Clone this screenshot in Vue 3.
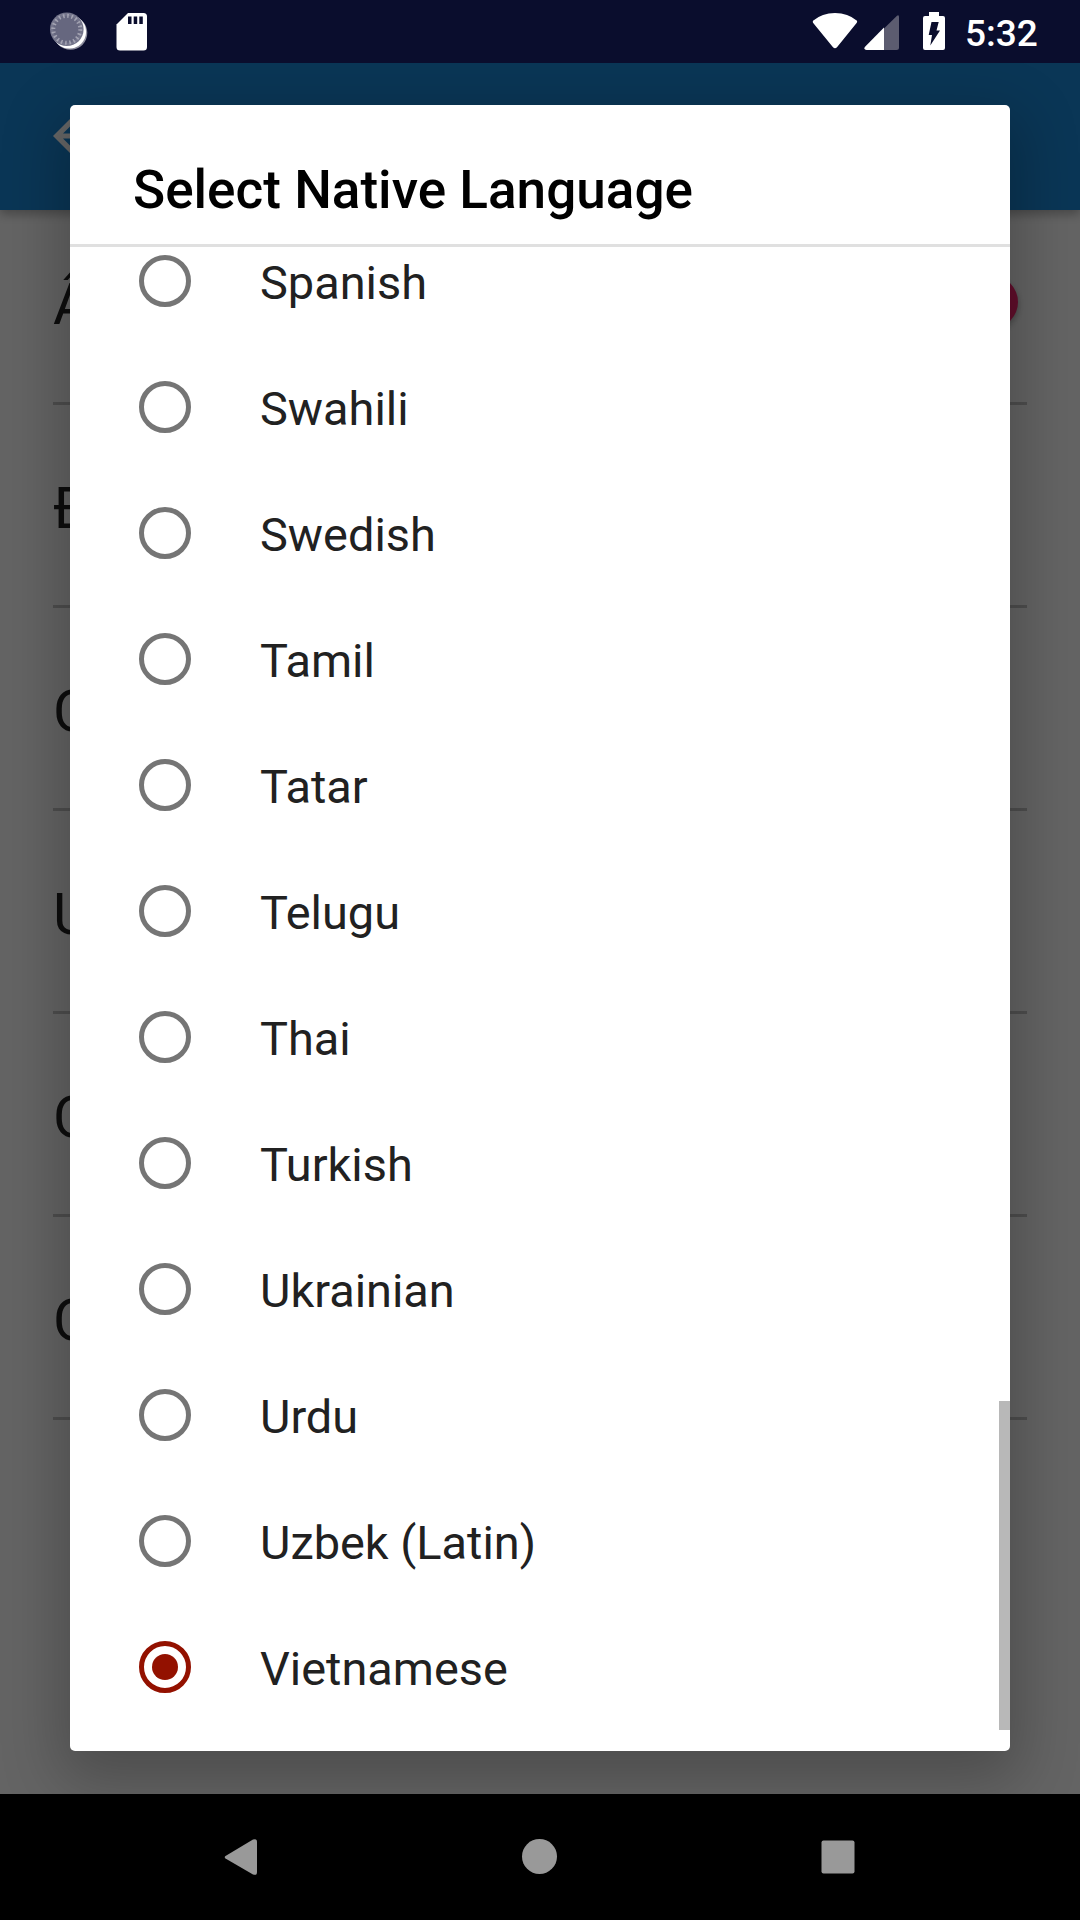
<template>
  <div class="screen">
    <header class="status-bar">
      <div class="status-left">
        <svg class="sync-icon" width="40" height="40" viewBox="0 0 40 40">
          <circle cx="20.5" cy="21" r="16.800" fill="#8d8d9d" />
          <circle cx="19.300" cy="19.800" r="16.800" fill="#fff" />
          <circle cx="16.800" cy="17.300" r="16.800" fill="#74758b" />
          <circle
            cx="16.800"
            cy="17.300"
            r="13.500"
            fill="#66677f"
            stroke="#a3a3b2"
            stroke-width="4"
            stroke-dasharray="1.6 2.64"
          />
        </svg>
        <svg class="sd-icon" width="32" height="40" viewBox="0 0 32 40">
          <path
            d="M12 1H27.5Q31 1 31 4.500V35Q31 38.500 27.500 38.500H4Q.500 38.500 .500 35V12.500Z"
            fill="#fff"
          />
          <path d="M12 4.500h3.500v7.500H12zM17.700 4.500h3.500v7.500h-3.500zM23.300 4.500h3.500v7.500h-3.500z" fill="#0a0d2d" />
        </svg>
      </div>
      <div class="status-right">
        <svg class="wifi-icon" width="46" height="38" viewBox="0 0 46 38">
          <path
            d="M1 8.800Q10 1 23 1T45 8.800Q45.500 10 44.600 11L25 35.200Q23 37.300 21 35.200L1.200 11Q.400 10 1 8.800Z"
            fill="#fff"
          />
        </svg>
        <svg class="cell-icon" width="36" height="37" viewBox="0 0 36 37">
          <path d="M20 14.500L33 1.800Q35 .500 35 3V33.500Q35 36 32.500 36H20Z" fill="#5c5c70" />
          <path d="M20 13.500V36H2.500Q-.500 36 .800 33Z" fill="#fff" />
        </svg>
        <svg class="battery-icon" width="22" height="38" viewBox="0 0 22 38">
          <path
            d="M6 0H16V4H20Q22 4 22 6V36Q22 38 20 38H2Q0 38 0 36V6Q0 4 2 4H6Z"
            fill="#fff"
          />
          <path d="M8.500 10H15.700L13.500 18.500H17L7.300 33.500L9 23H5.700Z" fill="#0a0d2d" />
        </svg>
        <span class="clock">5:32</span>
      </div>
    </header>

    <main class="page">
      <div class="app-bar">
        <svg width="42" height="42" viewBox="0 0 42 42">
          <path
            d="M42 18.400V23.600H10L24.700 38.300L21 42L0 21L21 0L24.700 3.700L10 18.400Z"
            fill="#fff"
          />
        </svg>
      </div>
      <ul class="settings">
        <li v-for="(item, index) in settings" :key="index" class="setting">
          <span class="setting-label">{{ item.label }}</span>
          <span v-if="item.toggle" class="thumb"></span>
        </li>
      </ul>
      <div class="scrim">
        <section class="dialog">
          <h1 class="dialog-title">Select Native Language</h1>
          <div class="list-viewport">
            <ul class="languages">
              <li
                v-for="language in languages"
                :key="language"
                class="language"
                @click="selected = language"
              >
                <span
                  class="radio"
                  :class="{ checked: language === selected }"
                ></span>
                <span class="language-name">{{ language }}</span>
              </li>
            </ul>
            <div class="scrollbar"></div>
          </div>
        </section>
      </div>
    </main>

    <nav class="nav-bar">
      <svg width="60" height="60" viewBox="0 0 60 60">
        <path d="M15.500 29L43 12.600Q47 11 47 15V45Q47 49 43 47.400L15.500 31.500Q14 30.200 15.500 29Z" />
      </svg>
      <svg width="60" height="60" viewBox="0 0 60 60">
        <circle cx="30.500" cy="29.500" r="17.500" />
      </svg>
      <svg width="60" height="60" viewBox="0 0 60 60">
        <rect x="13.500" y="13.500" width="33" height="33" rx="2" />
      </svg>
    </nav>
  </div>
</template>

<script setup>
import { ref } from "vue";

const languages = [
  "Spanish",
  "Swahili",
  "Swedish",
  "Tamil",
  "Tatar",
  "Telugu",
  "Thai",
  "Turkish",
  "Ukrainian",
  "Urdu",
  "Uzbek (Latin)",
  "Vietnamese",
];

const selected = ref("Vietnamese");

const settings = [
  { label: "Â", toggle: true },
  { label: "Đ" },
  { label: "C" },
  { label: "U" },
  { label: "C" },
  { label: "C" },
];
</script>

<style>
body {
  margin: 0;
  background: #000;
}
</style>

<style scoped>
.screen {
  width: 1080px;
  height: 1920px;
  display: flex;
  flex-direction: column;
  overflow: hidden;
  font-family: Roboto, "Noto Sans", sans-serif;
}

ul {
  margin: 0;
  padding: 0;
  list-style: none;
}

svg {
  display: block;
  flex: none;
}

/* 状态栏 */
.status-bar {
  height: 63px;
  flex: none;
  box-sizing: border-box;
  padding: 12px 42px 0 50px;
  display: flex;
  justify-content: space-between;
  align-items: flex-start;
  background: #0a0d2d;
}

.status-left,
.status-right {
  display: flex;
  align-items: flex-start;
}

.sd-icon {
  margin-left: 26px;
}

.cell-icon {
  margin: 2px 0 0 6px;
}

.battery-icon {
  margin-left: 23px;
}

.clock {
  width: 73px;
  margin-left: 20px;
  padding-top: 1px;
  font-size: 37px;
  line-height: 42px;
  font-weight: 500;
  color: #fff;
  white-space: nowrap;
}

/* 底层页面 */
.page {
  position: relative;
  flex: 1;
  overflow: hidden;
  background: #fafafa;
}

.app-bar {
  position: relative;
  height: 147px;
  box-sizing: border-box;
  padding: 52px 53px;
  background: #1988d8;
  box-shadow: 0 4px 10px rgba(0, 0, 0, 0.3);
}

.settings {
  padding: 0 53px;
  margin-top: -8px;
}

.setting {
  height: 203px;
  box-sizing: border-box;
  display: flex;
  align-items: center;
  justify-content: space-between;
  border-bottom: 3px solid #c4c4c4;
  font-size: 57.75px;
  line-height: 68px;
  color: #212121;
}

.setting-label {
  padding-top: 6px;
}

.setting:first-child .setting-label {
  padding-top: 4px;
}

.thumb {
  width: 52px;
  height: 52px;
  margin-right: 9px;
  border-radius: 50%;
  background: #f5236f;
  box-shadow: 0 3px 6px rgba(0, 0, 0, 0.3);
}

/* 遮罩和弹窗 */
.scrim {
  position: absolute;
  inset: 0;
  padding: 42px 70px 43px;
  display: flex;
  background: rgba(0, 0, 0, 0.6);
}

.dialog {
  flex: 1;
  display: flex;
  flex-direction: column;
  border-radius: 5px;
  overflow: hidden;
  background: #fff;
  box-shadow: 0 20px 60px 10px rgba(0, 0, 0, 0.24);
}

.dialog-title {
  margin: 0;
  height: 142px;
  box-sizing: border-box;
  padding: 54px 63px 0;
  border-bottom: 3px solid #e0e0e0;
  font-size: 53.1px;
  line-height: 62px;
  font-weight: 500;
  color: #000;
}

.list-viewport {
  position: relative;
  height: 1483px;
  overflow: hidden;
}

/* 列表已滚动到底部，首行被裁掉一部分 */
.languages {
  margin-top: -29px;
}

.language {
  height: 126px;
  padding-left: 69px;
  display: flex;
  align-items: center;
}

.radio {
  width: 52px;
  height: 52px;
  box-sizing: border-box;
  border: 5px solid #757575;
  border-radius: 50%;
  display: grid;
  place-items: center;
}

.radio.checked {
  border-color: #931100;
}

.radio.checked::after {
  content: "";
  width: 26px;
  height: 26px;
  border-radius: 50%;
  background: #931100;
}

.language-name {
  margin-left: 69px;
  padding-top: 4px;
  font-size: 46.9px;
  line-height: 56px;
  color: #212121;
}

.scrollbar {
  position: absolute;
  right: 0;
  bottom: 0;
  width: 11px;
  height: 329px;
  background: #b8b8b8;
}

/* 导航栏 */
.nav-bar {
  height: 126px;
  flex: none;
  box-sizing: border-box;
  padding: 0 212px 0 210px;
  display: flex;
  align-items: center;
  justify-content: space-between;
  background: #000;
  fill: #999;
}
</style>
